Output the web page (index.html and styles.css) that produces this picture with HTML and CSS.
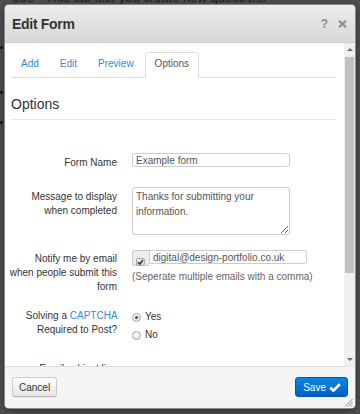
FILE: index.html
```html
<!DOCTYPE html>
<html>
<head>
<meta charset="utf-8">
<link rel="stylesheet" href="styles.css">
</head>
<body>
<div class="page">
  <p class="page-line">ooe - This tab lets you create new questions</p>
  <span class="bullet b1"></span>
  <span class="bullet b2"></span>
  <span class="bullet b3"></span>
  <span class="mark m1"></span>
  <span class="mark m2"></span>
  <span class="mark m3"></span>
  <span class="mark m4"></span>
</div>
<div class="modal">
  <div class="modal-header">
    <h3 class="modal-title">Edit Form</h3>
    <div class="header-actions">
      <span class="help">?</span>
      <svg class="close" width="9" height="8" viewBox="0 0 9 8"><path d="M1 0.8 L8 7.2 M8 0.8 L1 7.2" stroke="#8c8c8c" stroke-width="2.2" fill="none"/></svg>
    </div>
  </div>
  <div class="modal-body">
    <div class="body-content">
      <ul class="tabs">
        <li class="tab"><a class="tab-link">Add</a></li>
        <li class="tab"><a class="tab-link">Edit</a></li>
        <li class="tab"><a class="tab-link">Preview</a></li>
        <li class="tab"><a class="tab-link active">Options</a></li>
      </ul>
      <h2 class="section-title">Options</h2>
      <div class="form">
        <div class="row row-name">
          <label class="label">Form Name</label>
          <div class="controls"><input class="input input-name" type="text" value="Example form"></div>
        </div>
        <div class="row row-message">
          <label class="label">Message to display when completed</label>
          <div class="controls"><textarea class="textarea">Thanks for submitting your information.</textarea></div>
        </div>
        <div class="row row-notify">
          <label class="label label-notify">Notify me by email when people submit this form</label>
          <div class="controls">
            <div class="input-group">
              <span class="addon"><span class="checkbox"><svg width="7" height="6" viewBox="0 0 7 6"><path d="M1 3.2 L2.8 5 L6 1" stroke="#333" stroke-width="1.6" fill="none"/></svg></span></span>
              <input class="input input-email" type="text" value="digital@design-portfolio.co.uk">
            </div>
            <p class="help-text">(Seperate multiple emails with a comma)</p>
          </div>
        </div>
        <div class="row row-captcha">
          <label class="label label-captcha">Solving a <a class="link">CAPTCHA</a> Required to Post?</label>
          <div class="controls">
            <div class="radio-line"><span class="radio checked"></span>Yes</div>
            <div class="radio-line"><span class="radio"></span>No</div>
          </div>
        </div>
        <div class="row row-next">
          <label class="label label-next">Email subject line</label>
          <div class="controls"><input class="input input-wide" type="text" value=""></div>
        </div>
      </div>
    </div>
    <div class="scrollbar">
      <span class="sb-btn"><span class="tri-up"></span></span>
      <div class="sb-track"><div class="sb-thumb"></div></div>
      <span class="sb-btn"><span class="tri-down"></span></span>
    </div>
  </div>
  <div class="modal-footer">
    <button class="btn btn-cancel">Cancel</button>
    <button class="btn btn-primary">Save <svg class="check" width="12" height="9" viewBox="0 0 12 9"><path d="M1.2 4.6 L4.4 7.6 L10.8 1.3" stroke="#fff" stroke-width="2.7" fill="none"/></svg></button>
  </div>
  <svg class="grip" width="9" height="9" viewBox="0 0 9 9"><path d="M1 8.5 L8.5 1 M4 8.5 L8.5 4 M7 8.5 L8.5 7" stroke="#8a8a8a" stroke-width="1" fill="none"/></svg>
</div>
</body>
</html>
```
FILE: styles.css
```css
* { box-sizing: border-box; }
html, body { margin: 0; padding: 0; }
body {
  width: 360px;
  height: 414px;
  overflow: hidden;
  background: #515151;
  font-family: "Liberation Sans", Arial, sans-serif;
  font-size: 10px;
  color: #333;
  position: relative;
}

/* page behind the dialog */
.page { position: relative; width: 100%; height: 100%; }
.page-line {
  position: absolute;
  margin: 0;
  top: -10px;
  left: 12px;
  font-size: 13px;
  color: #1e1e1e;
  white-space: nowrap;
}
.bullet { position: absolute; left: 0; width: 3px; height: 3px; border-radius: 50%; background: #111; }
.b1 { top: 46px; }
.b2 { top: 91px; }
.b3 { top: 121px; }
.mark { position: absolute; width: 1px; height: 2px; background: #c42020; }
.m1 { left: 247px; top: 0; }
.m2 { left: 345px; top: 3px; }
.m3 { left: 247px; top: 411px; }
.m4 { left: 343px; top: 411px; }

/* dialog */
.modal {
  position: absolute;
  top: 4px;
  left: 4px;
  width: 352px;
  height: 405px;
  background: #fff;
  border: 1px solid rgba(0, 0, 0, 0.45);
  border-radius: 5px;
  box-shadow: 0 2px 8px rgba(0, 0, 0, 0.45);
  display: flex;
  flex-direction: column;
  overflow: hidden;
}
.modal-header {
  flex: none;
  height: 38px;
  display: flex;
  align-items: center;
  justify-content: space-between;
  padding: 0 8px 0 7px;
  background: linear-gradient(#ececec, #d8d8d8);
  border-bottom: 1px solid #cdcdcd;
}
.modal-title {
  margin: 0;
  font-size: 14px;
  font-weight: bold;
  letter-spacing: -0.3px;
  color: #333;
}
.header-actions { display: flex; align-items: center; gap: 10px; }
.help { font-size: 12px; font-weight: bold; color: #8c8c8c; line-height: 12px; }
.close { display: block; margin-top: 1px; }

.modal-body { flex: 1; min-height: 0; display: flex; }
.body-content {
  flex: 1;
  min-width: 0;
  padding: 9px 8px 0 6px;
  overflow: hidden;
}

/* tabs */
.tabs {
  list-style: none;
  margin: 0;
  padding: 0;
  display: flex;
  border-bottom: 1px solid #dddddd;
}
.tab { margin-right: 1px; }
.tab-link {
  display: block;
  line-height: 12px;
  padding: 5px 9px 7px;
  border: 1px solid transparent;
  border-radius: 4px 4px 0 0;
  margin-bottom: -1px;
  color: #2f8ad8;
}
.tab-link.active {
  color: #555;
  background: #fff;
  border-color: #dddddd #dddddd transparent;
}

.section-title {
  margin: 16px 0 0;
  font-size: 14px;
  font-weight: normal;
  line-height: 20px;
  padding-bottom: 5px;
  border-bottom: 1px solid #e8e8e8;
  color: #333;
}

/* form */
.form { margin-left: -2px; }
.row {
  display: grid;
  grid-template-columns: 108px 1fr;
  column-gap: 15px;
  align-items: start;
}
.label {
  text-align: right;
  line-height: 14px;
  padding-top: 3px;
  color: #333;
}
.row-name { margin-top: 33px; }
.row-message { margin-top: 17px; }
.row-notify { margin-top: 15px; }
.row-captcha { margin-top: 15px; }
.row-next { margin-top: 18px; }
.label-notify { padding-top: 2px; }
.label-captcha { padding-top: 0; }
.label-next { padding-top: 0; }
.link { color: #2f8ad8; }

.input {
  display: block;
  height: 14px;
  padding: 0 3px;
  border: 1px solid #cccccc;
  border-radius: 3px;
  font-family: inherit;
  font-size: 10px;
  color: #555;
  background: #fff;
  outline: none;
}
.input-name { width: 158px; }
.input-email { width: 158px; border-radius: 0 3px 3px 0; }
.input-wide { width: 204px; margin-top: 4px; height: 16px; }

.textarea {
  display: block;
  width: 158px;
  height: 48px;
  padding: 2px 3px;
  border: 1px solid #cccccc;
  border-radius: 3px;
  font-family: inherit;
  font-size: 10px;
  line-height: 14.5px;
  color: #555;
  outline: none;
}

.input-group { display: flex; align-items: flex-start; }
.addon {
  width: 17px;
  height: 16px;
  background: #eeeeee;
  border: 1px solid #cccccc;
  border-right: none;
  border-radius: 3px 0 0 3px;
  padding: 7px 0 0 3px;
}
.checkbox {
  display: flex;
  align-items: center;
  justify-content: center;
  width: 9px;
  height: 8px;
  border: 1px solid #a9a9a9;
  border-radius: 2px;
  background: linear-gradient(#f2f2f2, #d2d2d2);
}
.checkbox svg { display: block; }
.help-text {
  margin: 4px 0 0;
  line-height: 14px;
  color: #666;
  white-space: nowrap;
}

.radio-line {
  display: flex;
  align-items: center;
  line-height: 18px;
  color: #333;
}
.radio-line:first-child { margin-top: -1px; }
.radio {
  width: 9px;
  height: 9px;
  border: 1px solid #a6a6a6;
  border-radius: 50%;
  background: radial-gradient(circle at 40% 35%, #ffffff, #dcdcdc);
  margin-right: 4px;
  display: flex;
  align-items: center;
  justify-content: center;
}
.radio.checked::after {
  content: "";
  width: 3px;
  height: 3px;
  border-radius: 50%;
  background: #444;
}

/* fake scrollbar */
.scrollbar {
  flex: none;
  width: 11px;
  display: flex;
  flex-direction: column;
  background: #f0f0f0;
}
.sb-btn {
  flex: none;
  height: 13px;
  display: flex;
  align-items: center;
  justify-content: center;
}
.tri-up, .tri-down {
  width: 0;
  height: 0;
  border-left: 3px solid transparent;
  border-right: 3px solid transparent;
}
.tri-up { border-bottom: 3px solid #6a6a6a; }
.tri-down { border-top: 3px solid #6a6a6a; }
.sb-track { flex: 1; padding: 1px 1px 0; }
.sb-thumb { height: 216px; background: #c2c2c2; }

/* footer */
.modal-footer {
  flex: none;
  height: 42px;
  border-top: 1px solid #dddddd;
  background: #f5f5f5;
  display: flex;
  justify-content: space-between;
  align-items: flex-start;
  padding: 10px 7px 0;
}
.btn {
  height: 20px;
  font-family: inherit;
  font-size: 10px;
  border-radius: 3px;
  display: flex;
  align-items: center;
  cursor: pointer;
}
.btn-cancel {
  padding: 0 6px;
  color: #333;
  background: linear-gradient(#ffffff, #e6e6e6);
  border: 1px solid #cccccc;
  border-bottom-color: #b5b5b5;
  box-shadow: 0 1px 1px rgba(0, 0, 0, 0.06);
}
.btn-primary {
  padding: 0 6px 0 7px;
  gap: 3px;
  color: #fff;
  background: linear-gradient(#0b86dd, #0060c8);
  border: 1px solid #0057b8;
}
.check { display: block; }

.grip { position: absolute; right: 2px; bottom: 1px; }
```
